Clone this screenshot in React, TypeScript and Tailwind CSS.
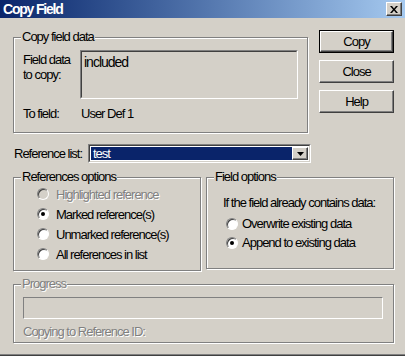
const FONT = "font-['Liberation_Sans',Arial,sans-serif] tracking-[-1px]";

function GroupBox({
  label,
  disabled,
  className,
  children,
}: {
  label: string;
  disabled?: boolean;
  className?: string;
  children?: React.ReactNode;
}) {
  return (
    <div className={"relative pt-[7px] " + (className ?? "")}>
      <div className="h-full border border-[#808080] shadow-[inset_1px_1px_0_#fff,1px_1px_0_#fff]">
        {children}
      </div>
      <span
        className={
          "absolute left-[8px] top-0 bg-[#d4d0c8] px-[1px] leading-[14px] " +
          (disabled ? "text-[#808080] [text-shadow:1px_1px_0_#fff]" : "text-black")
        }
      >
        {label}
      </span>
    </div>
  );
}

function Radio({ label, checked, disabled, className }: { label: string; checked?: boolean; disabled?: boolean; className?: string }) {
  return (
    <div className={"flex items-center " + (className ?? "")}>
      <span
        className={
          "relative h-[12px] w-[12px] shrink-0 rounded-full border border-t-[#808080] border-l-[#808080] border-r-white border-b-white shadow-[inset_1px_1px_0_#404040] " +
          (disabled ? "bg-[#d4d0c8]" : "bg-white")
        }
      >
        {checked && <span className="absolute left-[3px] top-[3px] h-[4px] w-[4px] rounded-full bg-black" />}
      </span>
      <span className={disabled ? "text-[#808080] [text-shadow:1px_1px_0_#fff]" : "text-black"}>{label}</span>
    </div>
  );
}

function Button({ label, isDefault }: { label: string; isDefault?: boolean }) {
  return (
    <div className={"h-[23px] w-[75px] " + (isDefault ? "border border-black" : "")}>
      <div className="flex h-full w-full items-center justify-center border border-t-white border-l-white border-r-[#404040] border-b-[#404040] shadow-[inset_-1px_-1px_0_#808080] text-black">
        {label}
      </div>
    </div>
  );
}

export default function App() {
  return (
    <div
      className={
        "flex h-[356px] w-[405px] flex-col overflow-hidden whitespace-nowrap bg-[#d4d0c8] text-[13px] leading-[15px] shadow-[inset_0_-1px_0_#404040,inset_0_-2px_0_#808080] " +
        FONT
      }
    >
      {/* Title bar */}
      <div className="flex h-[18px] shrink-0 items-center justify-between bg-gradient-to-r from-[#0a246a] to-[#a6caf0] pl-[3px] pr-[3px]">
        <span className="text-[14px] font-bold leading-[18px] tracking-[-1.2px] text-white">Copy Field</span>
        <div className="flex h-[14px] w-[16px] items-center justify-center border border-t-white border-l-white border-r-[#404040] border-b-[#404040] bg-[#d4d0c8] shadow-[inset_-1px_-1px_0_#808080]">
          <svg width="8" height="7" viewBox="0 0 8 7">
            <path d="M0 0h2l2 2.5L6 0h2L5 3.5 8 7H6L4 4.5 2 7H0l3-3.5z" fill="#000" />
          </svg>
        </div>
      </div>

      {/* Body */}
      <div className="flex flex-col pl-[13px] pt-[12px]">
        <div className="flex">
          <GroupBox label="Copy field data" className="h-[103px] w-[295px]">
            <div className="flex pl-[9px] pt-[12px]">
              <div className="mt-[2px] w-[57px]">
                Field data
                <br />
                to copy:
              </div>
              <div className="h-[49px] w-[218px] border border-t-[#808080] border-l-[#808080] border-r-white border-b-white">
                <div className="h-full w-full border border-t-[#404040] border-l-[#404040] border-r-[#d4d0c8] border-b-[#d4d0c8] pl-[2px] pt-[3px] text-[14px]">
                  included
                </div>
              </div>
            </div>
            <div className="mt-[7px] flex pl-[9px]">
              <span className="w-[58px]">To field:</span>
              <span>User Def 1</span>
            </div>
          </GroupBox>

          <div className="ml-[11px] flex flex-col gap-[7px]">
            <Button label="Copy" isDefault />
            <Button label="Close" />
            <Button label="Help" />
          </div>
        </div>

        {/* Reference list */}
        <div className="mt-[11px] flex items-center">
          <span className="ml-[1px] w-[74px]">Reference list:</span>
          <div className="h-[19px] w-[223px] border border-t-[#808080] border-l-[#808080] border-r-white border-b-white">
            <div className="flex h-full w-full items-center border border-t-[#404040] border-l-[#404040] border-r-[#d4d0c8] border-b-[#d4d0c8] bg-white p-[1px]">
              <div className="h-full flex-1 bg-[#0a246a] pl-[2px] leading-[13px] text-white">test</div>
              <div className="flex h-full w-[16px] items-center justify-center border border-t-white border-l-white border-r-[#404040] border-b-[#404040] bg-[#d4d0c8] shadow-[inset_-1px_-1px_0_#808080]">
                <svg width="7" height="4" viewBox="0 0 7 4">
                  <path d="M0 0h7L3.5 4z" fill="#000" />
                </svg>
              </div>
            </div>
          </div>
        </div>

        {/* Options */}
        <div className="mt-[7px] flex gap-[5px]">
          <GroupBox label="References options" className="h-[101px] w-[188px]">
            <div className="flex flex-col pl-[23px] pt-[6px]">
              <Radio label="Highlighted reference" disabled className="h-[20px] gap-[7px]" />
              <Radio label="Marked reference(s)" checked className="h-[20px] gap-[7px]" />
              <Radio label="Unmarked reference(s)" className="h-[20px] gap-[7px]" />
              <Radio label="All references in list" className="h-[20px] gap-[7px]" />
            </div>
          </GroupBox>
          <GroupBox label="Field options" className="h-[99px] w-[188px]">
            <div className="flex flex-col pl-[16px] pt-[17px]">
              <span>If the field already contains data:</span>
              <div className="mt-[4px] flex flex-col pl-[3px]">
                <Radio label="Overwrite existing data" className="h-[19px] gap-[4px]" />
                <Radio label="Append to existing data" checked className="h-[19px] gap-[4px]" />
              </div>
            </div>
          </GroupBox>
        </div>

        {/* Progress */}
        <GroupBox label="Progress" disabled className="mt-[6px] h-[66px] w-[381px]">
          <div className="flex flex-col pl-[9px] pt-[12px]">
            <div className="h-[22px] w-[360px] border border-t-[#808080] border-l-[#808080] border-r-white border-b-white" />
            <span className="mt-[5px] text-[#808080] [text-shadow:1px_1px_0_#fff]">Copying to Reference ID:</span>
          </div>
        </GroupBox>
      </div>
    </div>
  );
}
